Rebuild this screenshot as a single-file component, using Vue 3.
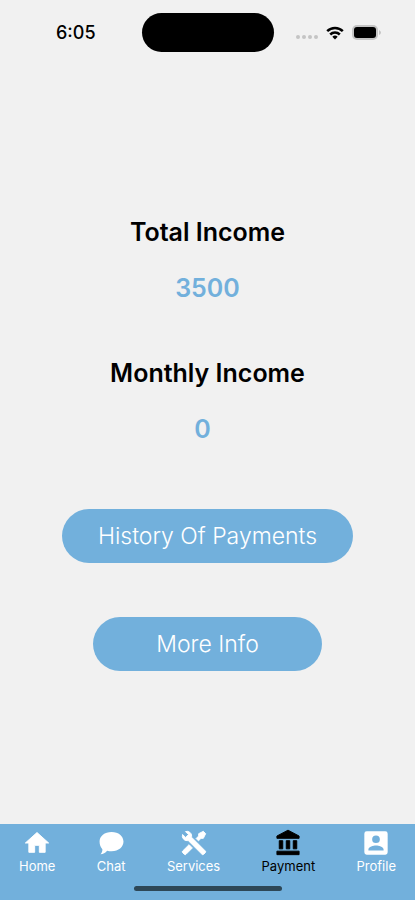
<script setup>
import { ref } from 'vue'

const totals = [
  { title: 'Total Income', value: '3500', short: false },
  { title: 'Monthly Income', value: '0', short: true }
]

const tabs = [
  {
    name: 'Home',
    paths: ['M10 20v-6h4v6h5v-8h3L12 3 2 12h3v8z'],
    heavy: true
  },
  {
    name: 'Chat',
    paths: ['M12.500 2.500c6 0 10.200 3.600 10.200 8.300s-4.200 8.300-10.200 8.300c-1.400 0-2.700-.2-3.800-.5C7.200 20.500 5.200 21.500 3 21.700c1.100-1.300 1.700-2.800 1.600-4.400C3 15.700 2.200 13.400 2.200 10.800c0-4.700 4.300-8.300 10.300-8.300z']
  },
  {
    name: 'Services',
    paths: [
      'M21.710 20.290l-1.420 1.420a1 1 0 0 1-1.410 0L7 9.850A3.810 3.810 0 0 1 6 10a4 4 0 0 1-3.780-5.300l2.540 2.540.530-.530 1.420-1.420.530-.530L4.700 2.220A4 4 0 0 1 10 6a3.810 3.810 0 0 1-.150 1l11.860 11.880a1 1 0 0 1 0 1.410z',
      'M2.290 18.880a1 1 0 0 0 0 1.410l1.420 1.420a1 1 0 0 0 1.410 0l5.470-5.460-2.830-2.830z',
      'M20 2l-4 2v2l-2.170 2.170 2 2L18 8h2l2-4z'
    ],
    heavy: true
  },
  {
    name: 'Payment',
    paths: ['M12 1L2.500 6v2h19V6zM16.500 10v7h3v-7zM2.500 22h19v-3h-19zM10.500 10v7h3v-7zM4.500 10v7h3v-7z'],
    heavy: true
  },
  {
    name: 'Profile',
    paths: ['M2 4v16a2 2 0 0 0 2 2h16a2 2 0 0 0 2-2V4a2 2 0 0 0-2-2H4a2 2 0 0 0-2 2zm13.300 4.800a3.300 3.300 0 1 1-6.600 0 3.300 3.300 0 0 1 6.600 0zM5.500 17.500c0-2.200 4.300-3.400 6.500-3.400s6.500 1.200 6.500 3.400v1h-13z']
  }
]

const active = ref('Payment')
</script>

<template>
  <div class="screen">
    <header class="status">
      <time class="clock">6:05</time>
      <div class="island"></div>
      <div class="signals">
        <span class="dots"><i v-for="n in 4" :key="n"></i></span>
        <svg class="wifi" viewBox="0 0 18 14" aria-hidden="true">
          <path d="M1.200 5.200a11 11 0 0 1 15.600 0" />
          <path d="M4.200 8.500a6.800 6.800 0 0 1 9.600 0" />
          <path class="solid" d="M6.300 10.700a4 4 0 0 1 5.400 0L9 13.600z" />
        </svg>
        <svg class="battery" viewBox="0 0 29 15" aria-hidden="true">
          <rect class="shell" width="26" height="15" rx="5" />
          <path class="shell" d="M27 5q2 1 2 2.500T27 10z" />
          <rect x="2" y="2" width="22" height="11" rx="3" />
        </svg>
      </div>
    </header>

    <main class="content">
      <section v-for="item in totals" :key="item.title" class="total">
        <h2 class="title">{{ item.title }}</h2>
        <p class="value" :class="{ short: item.short }">{{ item.value }}</p>
      </section>
      <div class="actions">
        <button type="button" class="action wide">History Of Payments</button>
        <button type="button" class="action">More Info</button>
      </div>
    </main>

    <footer class="footer">
      <nav class="tabs">
        <button
          v-for="tab in tabs"
          :key="tab.name"
          type="button"
          class="tab"
          :class="{ active: active === tab.name }"
          @click="active = tab.name"
        >
          <svg class="icon" :class="{ heavy: tab.heavy }" viewBox="0 0 24 24" aria-hidden="true">
            <path v-for="d in tab.paths" :key="d" :d="d" />
          </svg>
          <span>{{ tab.name }}</span>
        </button>
      </nav>
      <div class="indicator"></div>
    </footer>
  </div>
</template>

<style>
body {
  background: #f1f1f1;
}
</style>

<style scoped>
.screen {
  display: flex;
  flex-direction: column;
  min-height: 100vh;
  background: #f1f1f1;
  color: #000;
  font-family: Inter, "Liberation Sans", sans-serif;
}

.status {
  display: grid;
  grid-template-columns: 1fr 132px 1fr;
  align-items: center;
  padding-top: 13px;
  padding-bottom: 11px;
}

.clock {
  padding-left: 10px;
  text-align: center;
  font-size: 18px;
  font-weight: 500;
}

.island {
  height: 39px;
  border-radius: 20px;
  background: #000;
}

.signals {
  display: flex;
  align-items: center;
  justify-content: flex-end;
  gap: 8px;
  padding-right: 34px;
}

.dots {
  display: flex;
  gap: 2px;
  padding-top: 8px;
}

.dots i {
  width: 4px;
  height: 4px;
  border-radius: 50%;
  background: #c4c4c4;
}

.wifi {
  width: 18px;
  height: 14px;
  fill: none;
  stroke: #000;
  stroke-width: 2.5;
}

.wifi .solid {
  fill: #000;
  stroke: none;
}

.battery {
  width: 29px;
  height: 15px;
}

.battery .shell {
  fill: #c4c4c4;
}

.content {
  flex: 1;
  display: flex;
  flex-direction: column;
  align-items: center;
  justify-content: center;
}

.total {
  margin-bottom: 53px;
  text-align: center;
}

.title,
.value {
  margin: 0;
  font-size: 25px;
  line-height: 32px;
  font-weight: 600;
}

.value {
  margin-top: 24px;
  color: #72b0dc;
}

.short {
  padding-right: 10px;
}

.actions {
  display: flex;
  flex-direction: column;
  align-items: center;
  gap: 54px;
  width: 100%;
  padding-top: 11px;
}

.action {
  width: 55%;
  height: 54px;
  padding: 0;
  border: 0;
  border-radius: 27px;
  background: #72b0dc;
  color: #fff;
  font-family: inherit;
  font-size: 23px;
  font-weight: 300;
}

.wide {
  width: 70%;
}

.footer {
  background: #72b0dc;
  padding: 5px 19px 9px;
}

.tabs {
  display: flex;
  justify-content: space-between;
}

.tab {
  display: flex;
  flex-direction: column;
  align-items: center;
  padding: 0;
  border: 0;
  background: none;
  color: #fff;
  font-family: inherit;
  font-size: 13px;
  line-height: 18px;
}

.active {
  color: #000;
}

.icon {
  width: 28px;
  height: 28px;
  fill: currentColor;
}

.heavy {
  stroke: currentColor;
  stroke-width: 0.8;
}

.indicator {
  width: 148px;
  height: 5px;
  margin: 11px auto 0;
  border-radius: 3px;
  background: #2d4757;
}
</style>
